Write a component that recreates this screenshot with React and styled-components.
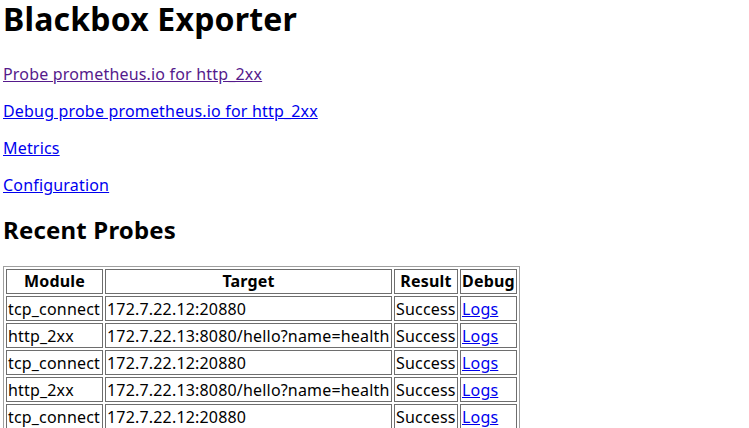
import React from 'react';
import styled, { createGlobalStyle } from 'styled-components'

const GlobalStyle = createGlobalStyle`
    body {
        margin: 0 0 0 3px;
        background: #fff;
        color: #000;
        font-family: "Noto Sans", "Open Sans", sans-serif;
        font-size: 16px;
        line-height: 21px;
        letter-spacing: 0.18px;
    }
`

const Title = styled.h1`
    margin: 0 0 26px;
    font-size: 32px;
    line-height: 38px;
    font-weight: bold;
`

const Para = styled.p`
    margin: 16px 0;
    line-height: 21px;
`

const Link = styled.a`
    color: ${props => props.visited ? '#551a8b' : '#0000ee'};
    text-decoration: underline;
`

const SubTitle = styled.h2`
    margin: 18px 0 20px;
    font-size: 24px;
    line-height: 32px;
    font-weight: bold;
`

const Table = styled.table`
    border: 1px solid #a0a0a0;
    border-spacing: 2px;
    border-collapse: separate;
`

const HeadCell = styled.th`
    width: ${props => props.w}px;
    padding: 1px;
    border: 1px solid #6e6e6e;
    font-weight: bold;
    text-align: center;
    white-space: nowrap;
`

const Cell = styled.td`
    padding: 2px 1px 0;
    border: 1px solid #6e6e6e;
    text-align: left;
    white-space: nowrap;
`

const probes = [
    { module: 'tcp_connect', target: '172.7.22.12:20880' },
    { module: 'http_2xx', target: '172.7.22.13:8080/hello?name=health' },
    { module: 'tcp_connect', target: '172.7.22.12:20880' },
    { module: 'http_2xx', target: '172.7.22.13:8080/hello?name=health' },
    { module: 'tcp_connect', target: '172.7.22.12:20880' },
]

export default function App() {
    return (
        <>
            <GlobalStyle />
            <Title>Blackbox Exporter</Title>
            <Para><Link visited href="#">Probe prometheus.io for http_2xx</Link></Para>
            <Para><Link href="#">Debug probe prometheus.io for http_2xx</Link></Para>
            <Para><Link href="#">Metrics</Link></Para>
            <Para><Link href="#">Configuration</Link></Para>
            <SubTitle>Recent Probes</SubTitle>
            <Table>
                <thead>
                    <tr>
                        <HeadCell w={93}>Module</HeadCell>
                        <HeadCell w={283}>Target</HeadCell>
                        <HeadCell w={60}>Result</HeadCell>
                        <HeadCell w={53}>Debug</HeadCell>
                    </tr>
                </thead>
                <tbody>
                    {probes.map((p, i) => (
                        <tr key={i}>
                            <Cell>{p.module}</Cell>
                            <Cell>{p.target}</Cell>
                            <Cell>Success</Cell>
                            <Cell><Link href="#">Logs</Link></Cell>
                        </tr>
                    ))}
                </tbody>
            </Table>
        </>
    )
}
